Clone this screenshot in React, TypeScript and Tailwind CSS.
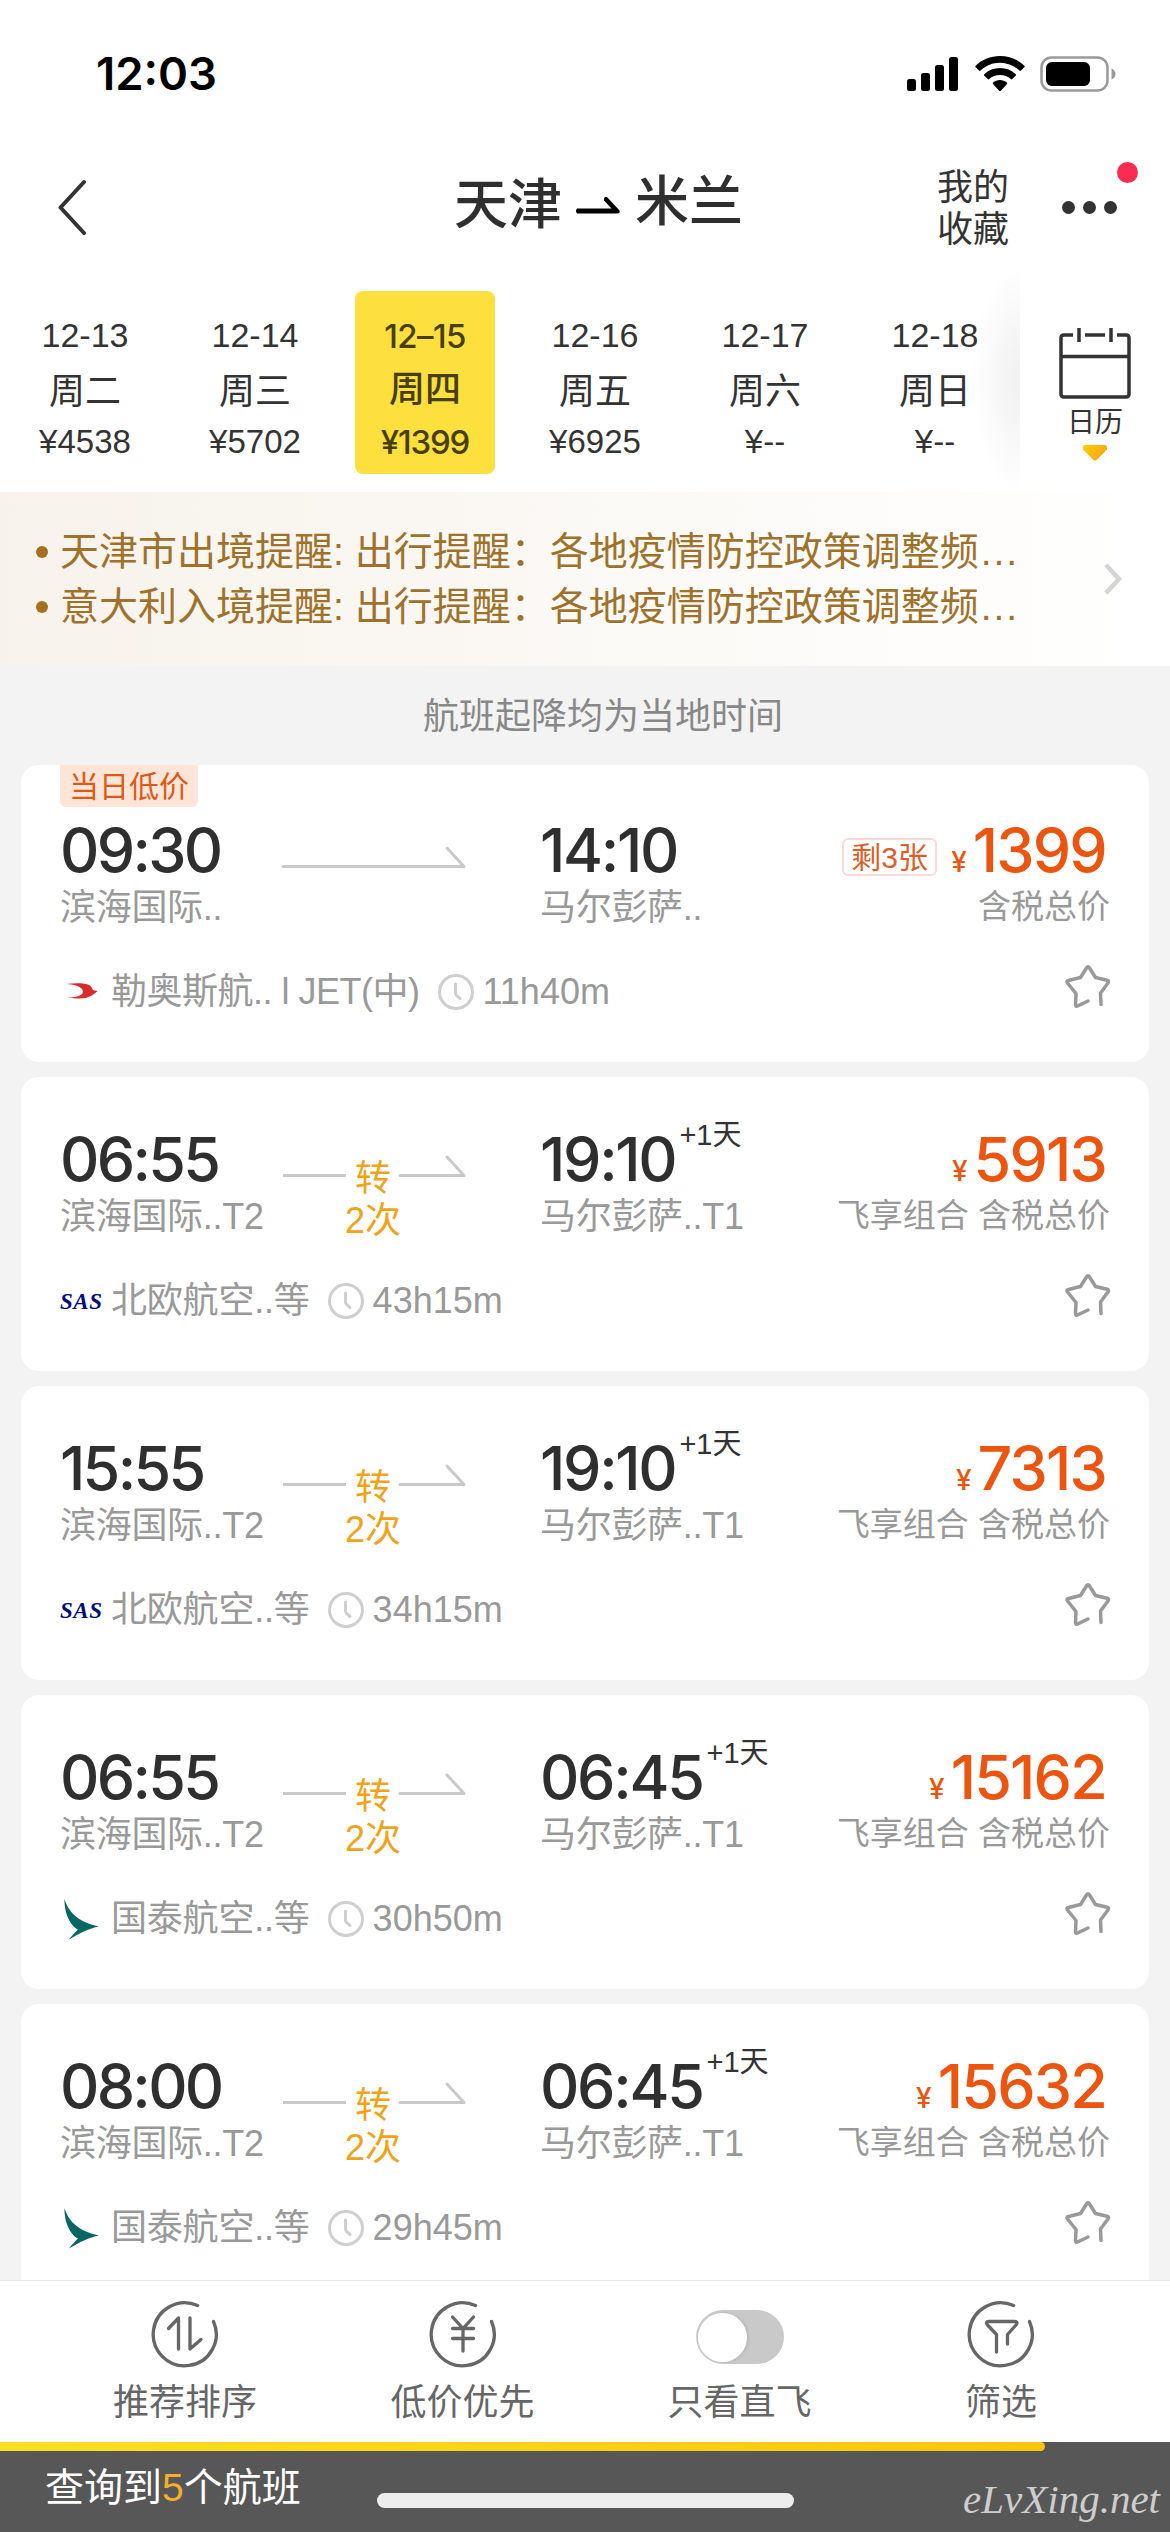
import React from "react";

interface DateOption {
  date: string;
  weekday: string;
  price: string;
  active?: boolean;
}

interface Flight {
  depart: string;
  departAirport: string;
  arrive: string;
  arriveAirport: string;
  nextDay?: boolean;
  transfers?: number;
  airline: string;
  logo: "loong" | "sas" | "cathay";
  duration: string;
  price: string;
  priceNote: string;
  seatsLeft?: string;
  tag?: string;
}

const dates: DateOption[] = [
  { date: "12-13", weekday: "周二", price: "¥4538" },
  { date: "12-14", weekday: "周三", price: "¥5702" },
  { date: "12–15", weekday: "周四", price: "¥1399", active: true },
  { date: "12-16", weekday: "周五", price: "¥6925" },
  { date: "12-17", weekday: "周六", price: "¥--" },
  { date: "12-18", weekday: "周日", price: "¥--" },
];

const notices = [
  "天津市出境提醒: 出行提醒：各地疫情防控政策调整频",
  "意大利入境提醒: 出行提醒：各地疫情防控政策调整频",
];

const flights: Flight[] = [
  {
    depart: "09:30",
    departAirport: "滨海国际..",
    arrive: "14:10",
    arriveAirport: "马尔彭萨..",
    airline: "勒奥斯航.. l JET(中)",
    logo: "loong",
    duration: "11h40m",
    price: "1399",
    priceNote: "含税总价",
    seatsLeft: "剩3张",
    tag: "当日低价",
  },
  {
    depart: "06:55",
    departAirport: "滨海国际..T2",
    arrive: "19:10",
    arriveAirport: "马尔彭萨..T1",
    nextDay: true,
    transfers: 2,
    airline: "北欧航空..等",
    logo: "sas",
    duration: "43h15m",
    price: "5913",
    priceNote: "飞享组合 含税总价",
  },
  {
    depart: "15:55",
    departAirport: "滨海国际..T2",
    arrive: "19:10",
    arriveAirport: "马尔彭萨..T1",
    nextDay: true,
    transfers: 2,
    airline: "北欧航空..等",
    logo: "sas",
    duration: "34h15m",
    price: "7313",
    priceNote: "飞享组合 含税总价",
  },
  {
    depart: "06:55",
    departAirport: "滨海国际..T2",
    arrive: "06:45",
    arriveAirport: "马尔彭萨..T1",
    nextDay: true,
    transfers: 2,
    airline: "国泰航空..等",
    logo: "cathay",
    duration: "30h50m",
    price: "15162",
    priceNote: "飞享组合 含税总价",
  },
  {
    depart: "08:00",
    departAirport: "滨海国际..T2",
    arrive: "06:45",
    arriveAirport: "马尔彭萨..T1",
    nextDay: true,
    transfers: 2,
    airline: "国泰航空..等",
    logo: "cathay",
    duration: "29h45m",
    price: "15632",
    priceNote: "飞享组合 含税总价",
  },
];

const StatusBar: React.FC = () => (
  <div className="flex h-[148px] shrink-0 items-center justify-between pl-[96px] pr-[53px]">
    <span className="font-['Inter'] text-[45.500px] font-semibold leading-none text-black">12:03</span>
    <div className="flex items-center">
      <svg className="h-[36px] w-[52px]" viewBox="0 0 52 36">
        <rect x="0" y="23" width="9" height="12" rx="2.5" />
        <rect x="14" y="17" width="9" height="18" rx="2.5" />
        <rect x="28" y="9" width="9" height="26" rx="2.5" />
        <rect x="42" y="1" width="9" height="34" rx="2.5" />
      </svg>
      <svg className="ml-[16px] h-[36px] w-[50px]" viewBox="0 0 50 36">
        <path d="M25 0C34.500 0 43 3.500 49.300 9.700c.5.5.5 1 0 1.500l-3.300 3.300c-.5.5-1 .5-1.500 0C39 9.500 32.300 6.800 25 6.800S11 9.500 5.500 14.500c-.5.5-1 .5-1.500 0L.7 11.200c-.5-.5-.5-1 0-1.500C7 3.500 15.500 0 25 0z" />
        <path d="M25 12c6 0 11.500 2.200 15.700 6.200.5.500.5 1 0 1.500l-3.400 3.300c-.5.5-1 .5-1.500 0C33 20.400 29.200 19 25 19s-8 1.400-10.800 4c-.5.5-1 .5-1.500 0l-3.400-3.300c-.5-.5-.5-1 0-1.500C13.500 14.200 19 12 25 12z" />
        <path d="M25 24c2.700 0 5 .9 6.900 2.500.5.400.5 1 .1 1.400l-6.200 6.800c-.5.5-1.100.5-1.600 0L18 27.900c-.4-.4-.4-1 .1-1.400C20 24.900 22.300 24 25 24z" />
      </svg>
      <svg className="ml-[15px] h-[38px] w-[77px]" viewBox="0 0 77 38">
        <rect x="1.500" y="2.500" width="66" height="33" rx="10" fill="none" stroke="#9a9a9a" strokeWidth="2.500" />
        <rect x="6" y="7" width="44" height="24" rx="6" />
        <path d="M71.500 13.500c2.700 1 4 3 4 5.500s-1.300 4.500-4 5.500z" fill="#9a9a9a" />
      </svg>
    </div>
  </div>
);

const Header: React.FC = () => (
  <div className="flex h-[118px] shrink-0 items-center pl-[56px] pr-[53px]">
    <svg className="h-[56px] w-[32px]" viewBox="0 0 32 56" fill="none" stroke="#333" strokeWidth="4" strokeLinecap="round" strokeLinejoin="round">
      <path d="M28 3 4.500 28.500 28 54" />
    </svg>
    <div className="ml-[366px] flex items-center text-[54px] font-medium leading-[60px] text-[#2f2f2f]">
      <span className="-mt-[4px]">天津</span>
      <svg className="ml-[13px] h-[20px] w-[46px]" viewBox="0 0 46 20">
        <path d="M2 11.500H36.500L29 3.500Q28.500 1 30 0h2l12.500 13.500Q45.500 16.500 42 16.500H2Q0 14 2 11.500z" />
      </svg>
      <span className="-mt-[11px] ml-[14px]">米兰</span>
    </div>
    <div className="ml-auto mr-[53px] mt-[4px] w-[72px] text-[36px] leading-[42px] text-[#333]">我的收藏</div>
    <div className="relative flex gap-[8px] pt-px">
      <i className="size-[13px] rounded-full bg-[#333]" />
      <i className="size-[13px] rounded-full bg-[#333]" />
      <i className="size-[13px] rounded-full bg-[#333]" />
      <b className="absolute -top-[38px] left-[55px] size-[21px] rounded-full bg-[#fb2c51]" />
    </div>
  </div>
);

const DateStrip: React.FC = () => (
  <div className="flex h-[226px] shrink-0">
    <div className="relative flex w-[1020px] pt-[25px]">
      {dates.map((d) => (
        <div key={d.date} className="flex w-[170px] justify-center">
          <div
            className={
              d.active
                ? "h-[183px] w-[140px] rounded-[8px] bg-[#fddf3e] pt-[23px] text-center font-medium text-[#483e0c]"
                : "h-[183px] w-[140px] pt-[22px] text-center text-[#333]"
            }
          >
            <p className={d.active ? "font-['Inter'] text-[33px] leading-[44px] tracking-[-0.600px]" : "text-[34px] leading-[44px]"}>{d.date}</p>
            <p className={d.active ? "mt-[10px] text-[36px] font-medium leading-[44px]" : "mt-[13px] text-[36px] leading-[44px]"}>{d.weekday}</p>
            <p className={d.active ? "mt-[8px] font-['Inter'] text-[33px] leading-[44px] tracking-[-1.200px]" : "mt-[6px] text-[33px] leading-[44px]"}>
              {d.price}
            </p>
          </div>
        </div>
      ))}
      <div className="absolute right-0 top-0 h-full w-[50px] bg-[radial-gradient(48px_115px_at_100%_50%,rgba(0,0,0,0.060),transparent)]" />
    </div>
    <div className="flex w-[150px] flex-col items-center pt-[60px]">
      <svg className="h-[74px] w-[74px]" viewBox="0 0 74 74" fill="none" stroke="#333" strokeWidth="3.500">
        <path d="M15 9H6q-3 0-3 3v56q0 3 3 3h62q3 0 3-3V12q0-3-3-3h-9M27 9h20M3 30.500h68M21 2v14M53 2v14" />
      </svg>
      <span className="mt-[6px] text-[28px] leading-[34px] text-[#333]">日历</span>
      <svg className="mt-[5px] h-[16px] w-[26px]" viewBox="0 0 26 16">
        <defs>
          <linearGradient id="drop" x1="0" x2="1" y1="0" y2="0.600">
            <stop offset="0" stopColor="#ffd200" />
            <stop offset="1" stopColor="#f7a41c" />
          </linearGradient>
        </defs>
        <path d="M3 0h20q2 0 2 2v2.500L14.500 15q-1.500 1-3 0L1 4.500V2q0-2 2-2z" fill="url(#drop)" />
      </svg>
    </div>
  </div>
);

const Notice: React.FC = () => (
  <div className="flex h-[174px] shrink-0 items-center justify-between bg-linear-to-r from-[#f7f2eb] via-[#fbf9f5] to-white pl-[36px] pr-[47px]">
    <ul className="-mt-px text-[39px] leading-[55px] text-[#9f722b]">
      {notices.map((text) => (
        <li key={text} className="flex items-center whitespace-nowrap">
          <i className="mr-[12px] mt-[2px] size-[12px] rounded-full bg-[#a5701f]" />
          {text}
          <span className="ml-[2px] tracking-[2px]">...</span>
        </li>
      ))}
    </ul>
    <svg className="h-[34px] w-[20px]" viewBox="0 0 20 34" fill="none" stroke="#d4d4d4" strokeWidth="4.500">
      <path d="M3 3 16 17 3 31" />
    </svg>
  </div>
);

const AirlineLogo: React.FC<{ name: Flight["logo"] }> = ({ name }) => {
  if (name === "sas") {
    return (
      <span className="w-[51px] font-['Liberation_Serif'] text-[23px] font-bold italic leading-none tracking-[0.500px] text-[#000a7a]">SAS</span>
    );
  }
  if (name === "loong") {
    return (
      <svg className="mr-[10px] h-[44px] w-[41px]" viewBox="0 0 41 44">
        <path d="M6 14c9-1 19-1 23 1 3 1.500 3 4 4 5 1 .5 3 .5 4.500 1-4 4-10 7.500-17 7.500-5 0-9-.5-15-1 7 0 13-.5 16-3 3-3 1-6-3-8-3-1.500-8-2.200-12.500-2.500z" fill="#d92b2b" />
      </svg>
    );
  }
  return (
    <svg className="mr-[10px] h-[44px] w-[41px]" viewBox="0 0 41 44">
      <path d="M4.500 2C8 14 17 25 39 29.500c-10 2-19 6.500-30 13 3-4 7-8 9-10C10 29 4 15 4.500 2z" fill="#0a6664" />
    </svg>
  );
};

const Route: React.FC<{ transfers?: number }> = ({ transfers }) => {
  if (!transfers) {
    return (
      <svg className="mt-[30px] h-[42px] w-[186px] overflow-visible" viewBox="0 0 186 42" fill="none" stroke="#c9c9c9" strokeWidth="3">
        <path d="M3 17.500H184L167 -1" strokeLinejoin="round" strokeLinecap="round" />
      </svg>
    );
  }
  return (
    <div className="mt-[30px] w-[186px] text-[36px] leading-[42px] text-[#efa31a]">
      <div className="flex justify-between">
        <svg className="h-[42px] w-[66px]" viewBox="0 0 66 42" stroke="#c9c9c9" strokeWidth="3">
          <path d="M3 17.500H66" />
        </svg>
        <span>转</span>
        <svg className="h-[42px] w-[66px] overflow-visible" viewBox="0 0 66 42" fill="none" stroke="#c9c9c9" strokeWidth="3">
          <path d="M0 17.500H64L47 -1" strokeLinejoin="round" strokeLinecap="round" />
        </svg>
      </div>
      <p className="text-center">{transfers}次</p>
    </div>
  );
};

const FlightCard: React.FC<{ flight: Flight }> = ({ flight }) => (
  <div
    className={
      flight.tag
        ? "relative h-[297px] shrink-0 rounded-[18px] bg-white px-[39px] pt-[54px]"
        : "relative h-[294px] shrink-0 rounded-[18px] bg-white px-[39px] pt-[51px]"
    }
  >
    {flight.tag && (
      <span className="absolute left-[39px] top-0 h-[42px] rounded-b-[6px] bg-[#fee5d8] px-[9px] text-[30px] leading-[44px] text-[#dc5a17]">
        {flight.tag}
      </span>
    )}
    <div className="flex h-[111px]">
      <div className="w-[220px]">
        <p className="font-['Inter'] text-[61px] font-medium leading-[62px] tracking-[-2.700px] text-[#2f2f2f]">{flight.depart}</p>
        <p className="mt-[5px] whitespace-nowrap text-[36px] leading-[44px] tracking-[-0.300px] text-[#999]">{flight.departAirport}</p>
      </div>
      <Route transfers={flight.transfers} />
      <div className="ml-[74px]">
        <div className="flex items-start">
          <span className="font-['Inter'] text-[61px] font-medium leading-[62px] tracking-[-2.300px] text-[#2f2f2f]">{flight.arrive}</span>
          {flight.nextDay && <span className="-mt-[7px] ml-[4px] text-[29px] leading-[28px] text-[#333]">+1天</span>}
        </div>
        <p className="mt-[5px] text-[36px] leading-[44px] tracking-[-0.300px] text-[#999]">{flight.arriveAirport}</p>
      </div>
      <div className="ml-auto">
        <div className="flex items-baseline justify-end pr-[4px] text-[#eb5510]">
          {flight.seatsLeft && (
            <span className="mr-[14px] mt-[19px] h-[38px] w-[95px] self-start rounded-[6px] border-2 border-[#fbd9d9] text-center text-[30px] leading-[35px] text-[#d9602a]">
              {flight.seatsLeft}
            </span>
          )}
          <span className="mr-[6px] font-['Inter'] text-[28px] font-medium">¥</span>
          <span className="font-['Inter'] text-[61px] font-medium leading-[62px] tracking-[-1.800px]">{flight.price}</span>
        </div>
        <p className="mt-[2px] text-right text-[33px] leading-[44px] text-[#999]">{flight.priceNote}</p>
      </div>
    </div>
    <div className="mt-[40px] flex h-[44px] items-center text-[36px] leading-[44px] text-[#999]">
      <AirlineLogo name={flight.logo} />
      <span className={flight.transfers ? "tracking-[-0.200px]" : "tracking-[-0.500px]"}>{flight.airline}</span>
      <svg className="ml-[17px] size-[38px]" viewBox="0 0 38 38" fill="none" stroke="#cfcfcf" strokeWidth="3" strokeLinecap="round">
        <circle cx="19" cy="19" r="16.500" />
        <path d="M18.500 11v9q0 1.500 1 2.500l3.500 3" />
      </svg>
      <span className="ml-[8px]">{flight.duration}</span>
      <svg
        className="-mr-[2px] mb-[12px] ml-auto h-[46px] w-[48px]"
        viewBox="0 0 48 46"
        fill="none"
        stroke="#999"
        strokeWidth="3.500"
        strokeLinecap="round"
        strokeLinejoin="round"
      >
        <path d="M37 41.500 36.500 30 44 20Q45.500 18 43 17.300L31.500 14.500 25.500 5Q24 2.500 22.500 5L16.500 14.500 4.500 17.500Q2 18.200 3.500 20L12 30.500 11.500 41.500Q11.500 44 13.500 43L24 38" />
      </svg>
    </div>
  </div>
);

const ToolIcon: React.FC<{ children: React.ReactNode }> = ({ children }) => (
  <svg className="size-[68px]" viewBox="0 0 68 68" fill="none" stroke="#666" strokeWidth="3.300" strokeLinecap="round" strokeLinejoin="round">
    <path d="M46.500 5.500A31.500 31.500 0 1 0 62.500 21.500" />
    {children}
  </svg>
);

const Toolbar: React.FC = () => (
  <div className="grid h-[162px] shrink-0 grid-cols-[278px_277px_277px_246px] border-t border-[#e8e8e8] bg-white pl-[46px] pt-[19px] text-[36px] leading-[44px] text-[#666]">
    <div className="flex flex-col items-center">
      <ToolIcon>
        <path d="M17.500 28.500 27.500 18v31M50 39.500 39 49V18" />
      </ToolIcon>
      <span className="mt-[13px]">推荐排序</span>
    </div>
    <div className="flex flex-col items-center">
      <ToolIcon>
        <path d="M23.500 17 34 28.500 44.500 17M34 28.500V51M23.500 28.500h21M23.500 38.500h21" />
      </ToolIcon>
      <span className="mt-[13px]">低价优先</span>
    </div>
    <div className="flex flex-col items-center">
      <div className="mb-[4px] mt-[10px] flex h-[54px] w-[88px] items-center rounded-full bg-[#c9c9c9] pl-[2px]">
        <i className="size-[49px] rounded-full bg-white shadow-[2px_0_3px_rgba(0,0,0,0.080)]" />
      </div>
      <span className="mt-[13px]">只看直飞</span>
    </div>
    <div className="flex flex-col items-center">
      <ToolIcon>
        <path d="M29.500 52V34.500L20.500 25Q18 21.500 22 21.500H47Q51.500 21.500 49 25L40.500 34.500V44" />
      </ToolIcon>
      <span className="mt-[13px]">筛选</span>
    </div>
  </div>
);

const App: React.FC = () => (
  <div className="flex h-[2532px] w-[1170px] flex-col overflow-hidden bg-white font-['Liberation_Sans','Noto_Sans_CJK_SC',sans-serif]">
    <StatusBar />
    <Header />
    <DateStrip />
    <Notice />
    <div className="flex min-h-0 flex-1 flex-col gap-[15px] overflow-hidden bg-[#f3f3f3] px-[21px]">
      <p className="h-[84px] shrink-0 pl-[36px] pt-[29px] text-center text-[36px] leading-[44px] text-[#888]">航班起降均为当地时间</p>
      {flights.map((flight) => (
        <FlightCard key={flight.depart + flight.duration} flight={flight} />
      ))}
    </div>
    <Toolbar />
    <div className="h-[90px] shrink-0 bg-[#575757]">
      <div className="h-[9px] w-[1045px] rounded-r-full bg-linear-to-r from-[#fbdf22] to-[#fdc508]" />
      <div className="flex h-[81px] pl-[45px] pr-[10px]">
        <p className="w-[332px] pt-[15px] text-[39px] leading-[44px] text-white">
          查询到<span className="text-[#f3b02c]">5</span>个航班
        </p>
        <div className="mt-[42px] h-[15px] w-[417px] rounded-full bg-[#ededed]" />
        <span className="ml-auto pt-[26px] font-['Liberation_Serif'] text-[41px] italic leading-[44px] text-[#cdcdcd]">eLvXing.net</span>
      </div>
    </div>
  </div>
);

export default App;
